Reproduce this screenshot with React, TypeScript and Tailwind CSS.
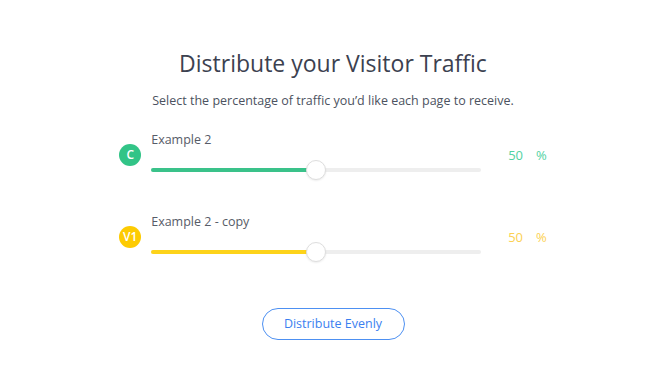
import React from "react";

type Page = {
  badge: string;
  name: string;
  value: number;
  badgeClass: string;
  fillClass: string;
  textClass: string;
};

const pages: Page[] = [
  {
    badge: "C",
    name: "Example 2",
    value: 50,
    badgeClass: "bg-[#32c487]",
    fillClass: "bg-[#3ac28a]",
    textClass: "text-[#52d2a2]",
  },
  {
    badge: "V1",
    name: "Example 2 - copy",
    value: 50,
    badgeClass: "bg-[#fdcb02]",
    fillClass: "bg-[#fdd31a]",
    textClass: "text-[#fcd152]",
  },
];

function TrafficSlider({ page }: { page: Page }) {
  return (
    <div className="flex items-center">
      <div
        className={`flex h-[22px] w-[22px] items-center justify-center rounded-full text-[12px] font-semibold text-white ${page.badgeClass}`}
      >
        {page.badge}
      </div>
      <div className="ml-[10px] flex w-[330px] flex-col">
        <p className="text-[12.5px] leading-[20px] text-[#575c68]">{page.name}</p>
        <div className="relative mt-[10px] h-[20px]">
          <div className="absolute left-0 right-0 top-[8px] h-[4px] rounded-full bg-[#eeeeee]" />
          <div
            className={`absolute left-0 top-[8px] h-[4px] rounded-full ${page.fillClass}`}
            style={{ width: `${page.value}%` }}
          />
          <div
            className="absolute top-0 h-[20px] w-[20px] -translate-x-1/2 rounded-full border-[1.5px] border-[#dedede] bg-white shadow-[0_1px_2px_rgba(0,0,0,0.08)]"
            style={{ left: `${page.value}%` }}
          />
        </div>
      </div>
      <div className={`ml-[27px] flex text-[13px] leading-[20px] ${page.textClass}`}>
        <span>{page.value}</span>
        <span className="ml-[13px]">%</span>
      </div>
    </div>
  );
}

export default function App() {
  return (
    <div className="flex h-[376px] w-full justify-center bg-white pl-[16px] font-['Open_Sans',sans-serif]">
      <div className="flex flex-col items-center pt-[47px]">
        <h1 className="text-[23px] leading-[32px] text-[#3c4150]">Distribute your Visitor Traffic</h1>
        <p className="mt-[12px] text-[12.5px] leading-[20px] text-[#4c5260]">
          Select the percentage of traffic you’d like each page to receive.
        </p>
        <div className="mt-[19px] flex flex-col gap-[32px] self-start pl-[0px]">
          {pages.map((page) => (
            <TrafficSlider key={page.badge} page={page} />
          ))}
        </div>
        <button className="mt-[46px] h-[32px] w-[143px] rounded-full border-[1.5px] border-[#4d90f2] text-[12.5px] text-[#3b7ff0]">
          Distribute Evenly
        </button>
      </div>
    </div>
  );
}
